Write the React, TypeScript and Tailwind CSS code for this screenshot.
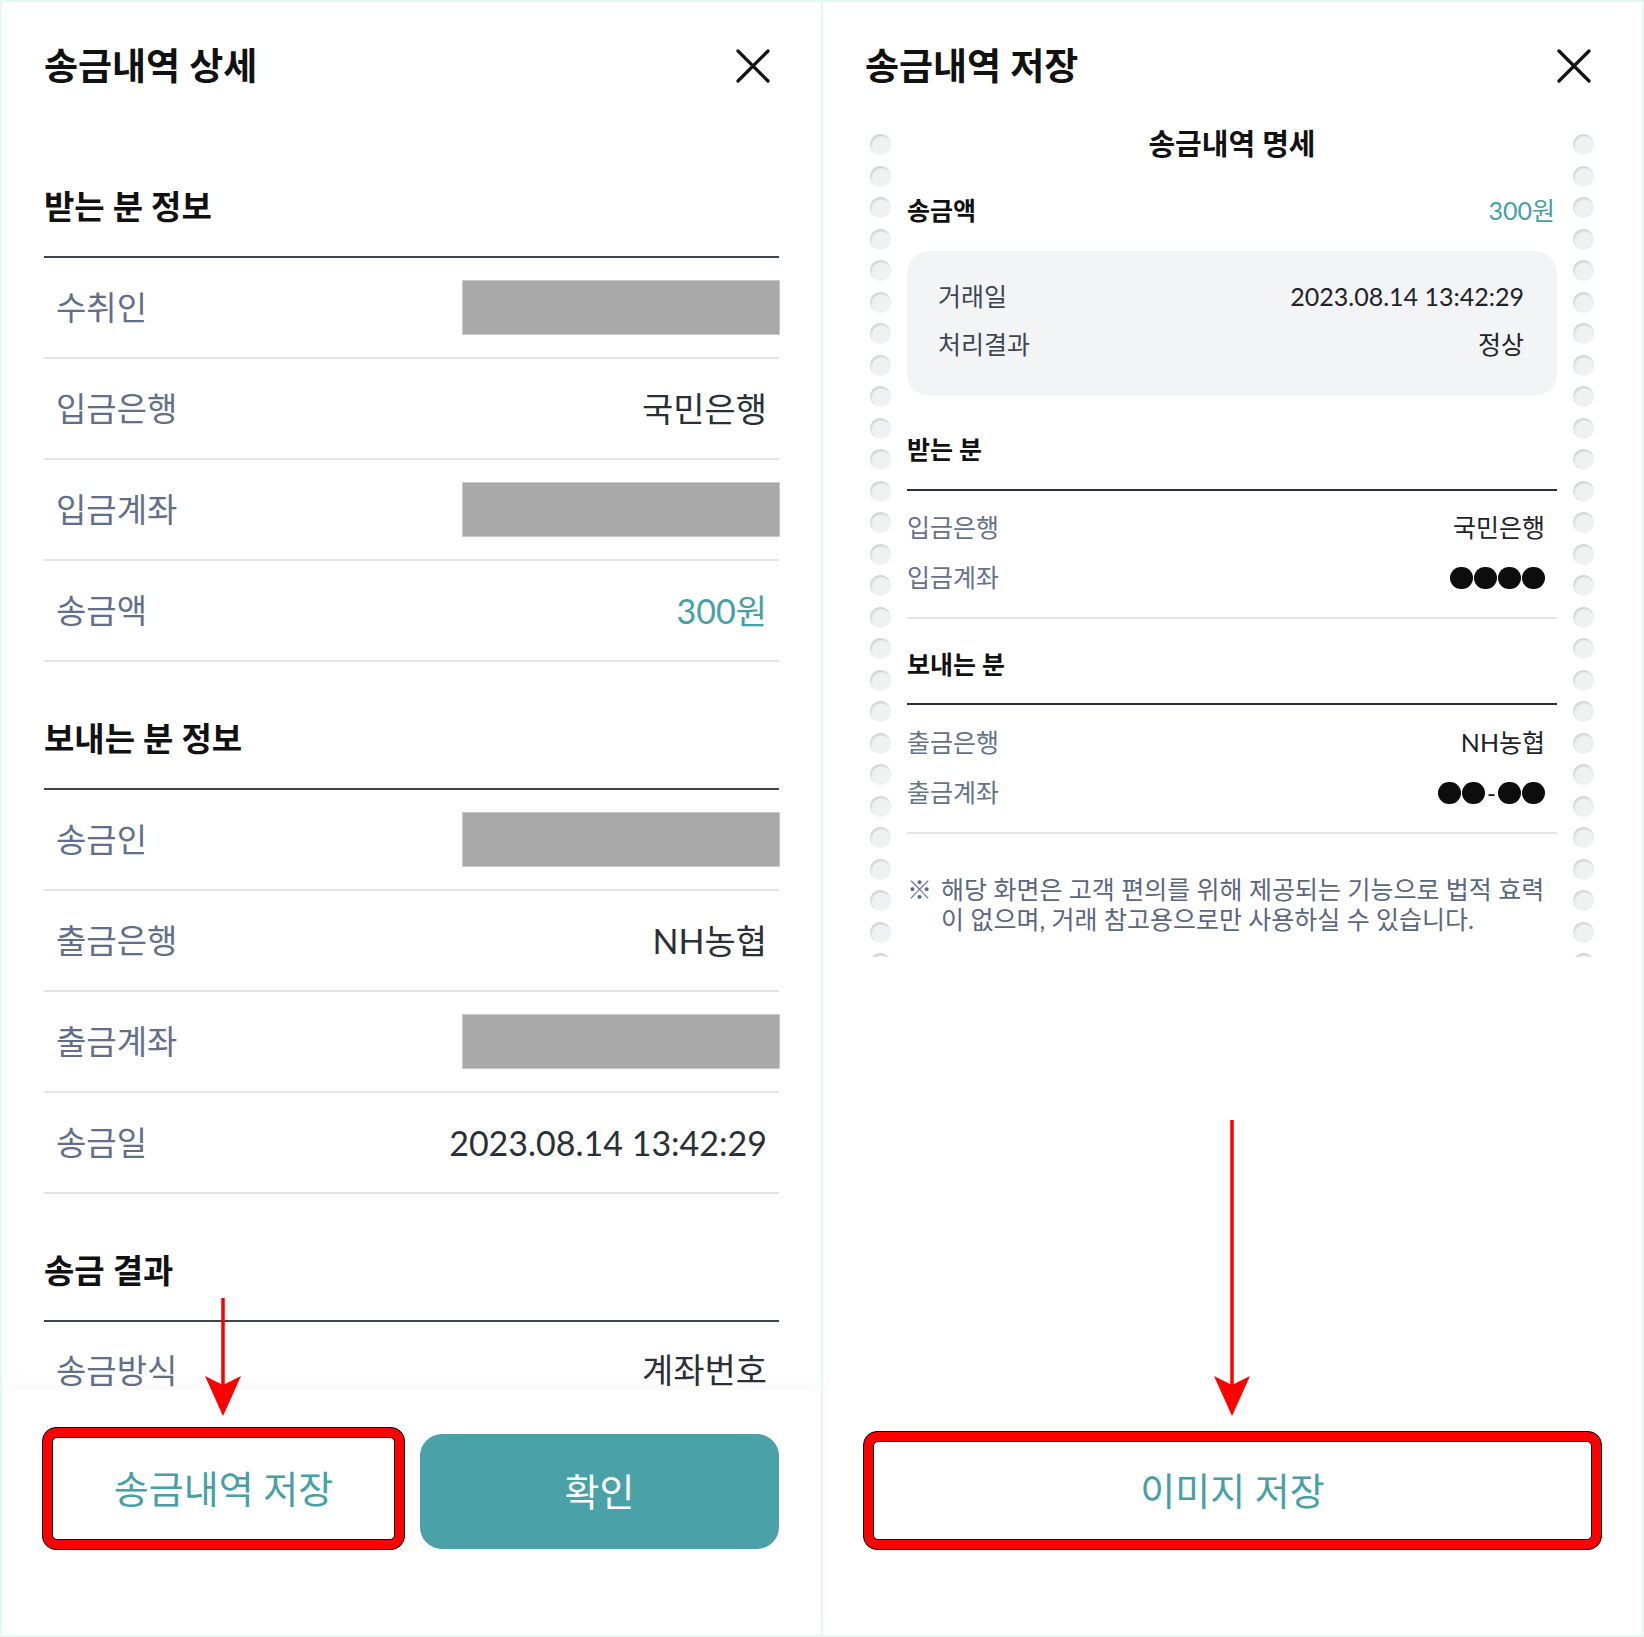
import React from 'react';

// 송금내역 상세 / 송금내역 저장 side-by-side capture

const CloseIcon = () => (
  <svg width="34" height="34" viewBox="0 0 34 34" fill="none">
    <path d="M2 2L32 32M32 2L2 32" stroke="#111111" strokeWidth="3.2" strokeLinecap="round" />
  </svg>
);

const Header = ({ title }: { title: string }) => (
  <div className="flex items-start justify-between pt-[46px]">
    <h1 className="text-[37px] font-bold leading-[36px] text-[#111111]">{title}</h1>
    <div className="mr-[9px] mt-[1px]">
      <CloseIcon />
    </div>
  </div>
);

const RedArrow = ({ className, length }: { className: string; length: number }) => (
  <svg className={className} width="36" height={length} viewBox={`0 0 36 ${length}`}>
    <line x1="18" y1="0" x2="18" y2={length - 30} stroke="#ff0000" strokeWidth="3.5" />
    <polygon
      points={`0,${length - 40} 18,${length - 31} 36,${length - 40} 18,${length}`}
      fill="#ff0000"
    />
  </svg>
);

const Redacted = () => <div className="h-[53px] w-[316px] bg-[#a9a9a9] ring-1 ring-[#c9c9c9]" />;

const SectionTitle = ({ children }: { children: React.ReactNode }) => (
  <>
    <div className="h-[126px] pt-[60px]">
      <h2 className="text-[33px] font-bold leading-[32px] text-[#111111]">{children}</h2>
    </div>
    <div className="h-[2px] bg-[#3f4451]" />
  </>
);

const DetailRow = ({ label, children }: { label: string; children: React.ReactNode }) => (
  <div className="flex h-[101px] items-center justify-between border-b-2 border-[#e3e4e8]">
    <span className="pl-[12px] text-[33px] text-[#636f88]">{label}</span>
    {children}
  </div>
);

const Value = ({ children, teal }: { children: React.ReactNode; teal?: boolean }) => (
  <span className={`pr-[12px] text-[34px] ${teal ? 'text-[#46a0a6]' : 'text-[#2b2f37]'}`}>{children}</span>
);

const Perforation = () => (
  <div className="flex w-[21px] shrink-0 flex-col gap-[10.5px] pt-[11px]">
    {Array.from({ length: 27 }).map((_, i) => (
      <div
        key={i}
        className="h-[21px] w-[21px] shrink-0 rounded-full bg-[#f0f1f3] shadow-[inset_1px_2px_2px_rgba(0,0,0,0.13)]"
      />
    ))}
  </div>
);

const Dots = ({ pattern }: { pattern: string }) => (
  <div className="flex items-center gap-[1px] pr-[12px]">
    {pattern.split('').map((c, i) =>
      c === '-' ? (
        <span key={i} className="mx-[1px] text-[24px] leading-none text-[#111111]">-</span>
      ) : (
        <div key={i} className="h-[22px] w-[23px] rounded-full bg-[#0d0d0d]" />
      )
    )}
  </div>
);

const ReceiptRow = ({ label, children }: { label: string; children: React.ReactNode }) => (
  <div className="flex h-[50px] items-center justify-between">
    <span className="text-[25px] text-[#66718a]">{label}</span>
    {children}
  </div>
);

const ReceiptHeading = ({ children }: { children: React.ReactNode }) => (
  <div className="flex h-[40px] items-center text-[25px] font-bold text-[#111111]">{children}</div>
);

export default function App() {
  return (
    <div className="flex h-[1637px] w-[1644px] border-2 border-[#e4f9f2] bg-white font-[Lato,'Noto_Sans_CJK_KR',sans-serif]">
      {/* left: 송금내역 상세 */}
      <div className="relative flex h-full w-[819px] flex-col bg-white">
        <div className="h-[1388px] overflow-hidden px-[42px]">
          <div className="h-[128px]">
            <Header title="송금내역 상세" />
          </div>

          <SectionTitle>받는 분 정보</SectionTitle>
          <DetailRow label="수취인">
            <Redacted />
          </DetailRow>
          <DetailRow label="입금은행">
            <Value>국민은행</Value>
          </DetailRow>
          <DetailRow label="입금계좌">
            <Redacted />
          </DetailRow>
          <DetailRow label="송금액">
            <Value teal>300원</Value>
          </DetailRow>

          <SectionTitle>보내는 분 정보</SectionTitle>
          <DetailRow label="송금인">
            <Redacted />
          </DetailRow>
          <DetailRow label="출금은행">
            <Value>NH농협</Value>
          </DetailRow>
          <DetailRow label="출금계좌">
            <Redacted />
          </DetailRow>
          <DetailRow label="송금일">
            <Value>2023.08.14 13:42:29</Value>
          </DetailRow>

          <SectionTitle>송금 결과</SectionTitle>
          <div className="flex h-[66px] items-start justify-between pt-[31px] leading-[34px]">
            <span className="pl-[12px] text-[33px] text-[#636f88]">송금방식</span>
            <span className="pr-[12px] text-[34px] text-[#2b2f37]">계좌번호</span>
          </div>
        </div>

        <div className="relative z-10 flex flex-1 items-start gap-[15px] bg-white pl-[40px] pr-[42px] pt-[37px] shadow-[0_-8px_16px_rgba(0,0,0,0.025)]">
          <div className="h-[123px] w-[363px] rounded-[14px] border border-black bg-[#ff0000] p-[9px]">
            <button className="flex h-full w-full items-center justify-center rounded-[5px] border border-black bg-white text-[38px] text-[#46a0a6]">
              송금내역 저장
            </button>
          </div>
          <button className="mt-[7px] flex h-[115px] flex-1 items-center justify-center rounded-[22px] bg-[#4aa1a8] text-[38px] text-white">
            확인
          </button>
        </div>

        <RedArrow className="absolute left-[203px] top-[1296px] z-20" length={118} />
      </div>

      <div className="w-[2px] bg-[#e4f9f2]" />

      {/* right: 송금내역 저장 */}
      <div className="relative flex h-full flex-1 flex-col bg-white">
        <div className="h-[121px] px-[42px]">
          <Header title="송금내역 저장" />
        </div>

        <div className="flex h-[834px] gap-[16px] overflow-hidden px-[47px]">
          <Perforation />
          <div className="w-[650px] shrink-0">
            <div className="h-[42px] text-center text-[29px] font-bold leading-[42px] text-[#111111]">
              송금내역 명세
            </div>
            <div className="mt-[26px] flex h-[40px] items-center justify-between">
              <span className="text-[25px] font-bold text-[#111111]">송금액</span>
              <span className="pr-[2px] text-[25px] text-[#46a0a6]">300원</span>
            </div>
            <div className="mt-[20px] rounded-[22px] bg-[#f3f4f6] px-[31px] pb-[27px] pt-[22px]">
              <div className="flex h-[48px] items-center justify-between">
                <span className="text-[25px] text-[#3f4553]">거래일</span>
                <span className="pr-[2px] text-[25px] text-[#1f2328]">2023.08.14 13:42:29</span>
              </div>
              <div className="flex h-[48px] items-center justify-between">
                <span className="text-[25px] text-[#3f4553]">처리결과</span>
                <span className="pr-[2px] text-[25px] text-[#1f2328]">정상</span>
              </div>
            </div>

            <div className="mt-[34px]">
              <ReceiptHeading>받는 분</ReceiptHeading>
            </div>
            <div className="mt-[19px] h-[2px] bg-[#2a2f3a]" />
            <div className="mt-[12px]">
              <ReceiptRow label="입금은행">
                <span className="pr-[12px] text-[25px] text-[#1f2328]">국민은행</span>
              </ReceiptRow>
              <ReceiptRow label="입금계좌">
                <Dots pattern="oooo" />
              </ReceiptRow>
            </div>
            <div className="mt-[14px] h-[2px] bg-[#e3e4e8]" />

            <div className="mt-[26px]">
              <ReceiptHeading>보내는 분</ReceiptHeading>
            </div>
            <div className="mt-[18px] h-[2px] bg-[#2a2f3a]" />
            <div className="mt-[13px]">
              <ReceiptRow label="출금은행">
                <span className="pr-[12px] text-[25px] text-[#1f2328]">NH농협</span>
              </ReceiptRow>
              <ReceiptRow label="출금계좌">
                <Dots pattern="oo-oo" />
              </ReceiptRow>
            </div>
            <div className="mt-[14px] h-[2px] bg-[#e3e4e8]" />

            <div className="mt-[40px] flex text-[25px] leading-[30px] text-[#5b6680]">
              <span className="w-[34px] shrink-0">※</span>
              <p className="whitespace-nowrap">
                해당 화면은 고객 편의를 위해 제공되는 기능으로 법적 효력
                <br />
                이 없으며, 거래 참고용으로만 사용하실 수 있습니다.
              </p>
            </div>
          </div>
          <Perforation />
        </div>

        <div className="mx-[40px] mb-[85px] mt-auto h-[119px] rounded-[14px] border border-black bg-[#ff0000] p-[9px]">
          <button className="flex h-full w-full items-center justify-center rounded-[5px] border border-black bg-white text-[38px] text-[#46a0a6]">
            이미지 저장
          </button>
        </div>

        <RedArrow className="absolute left-[391px] top-[1118px]" length={296} />
      </div>
    </div>
  );
}
